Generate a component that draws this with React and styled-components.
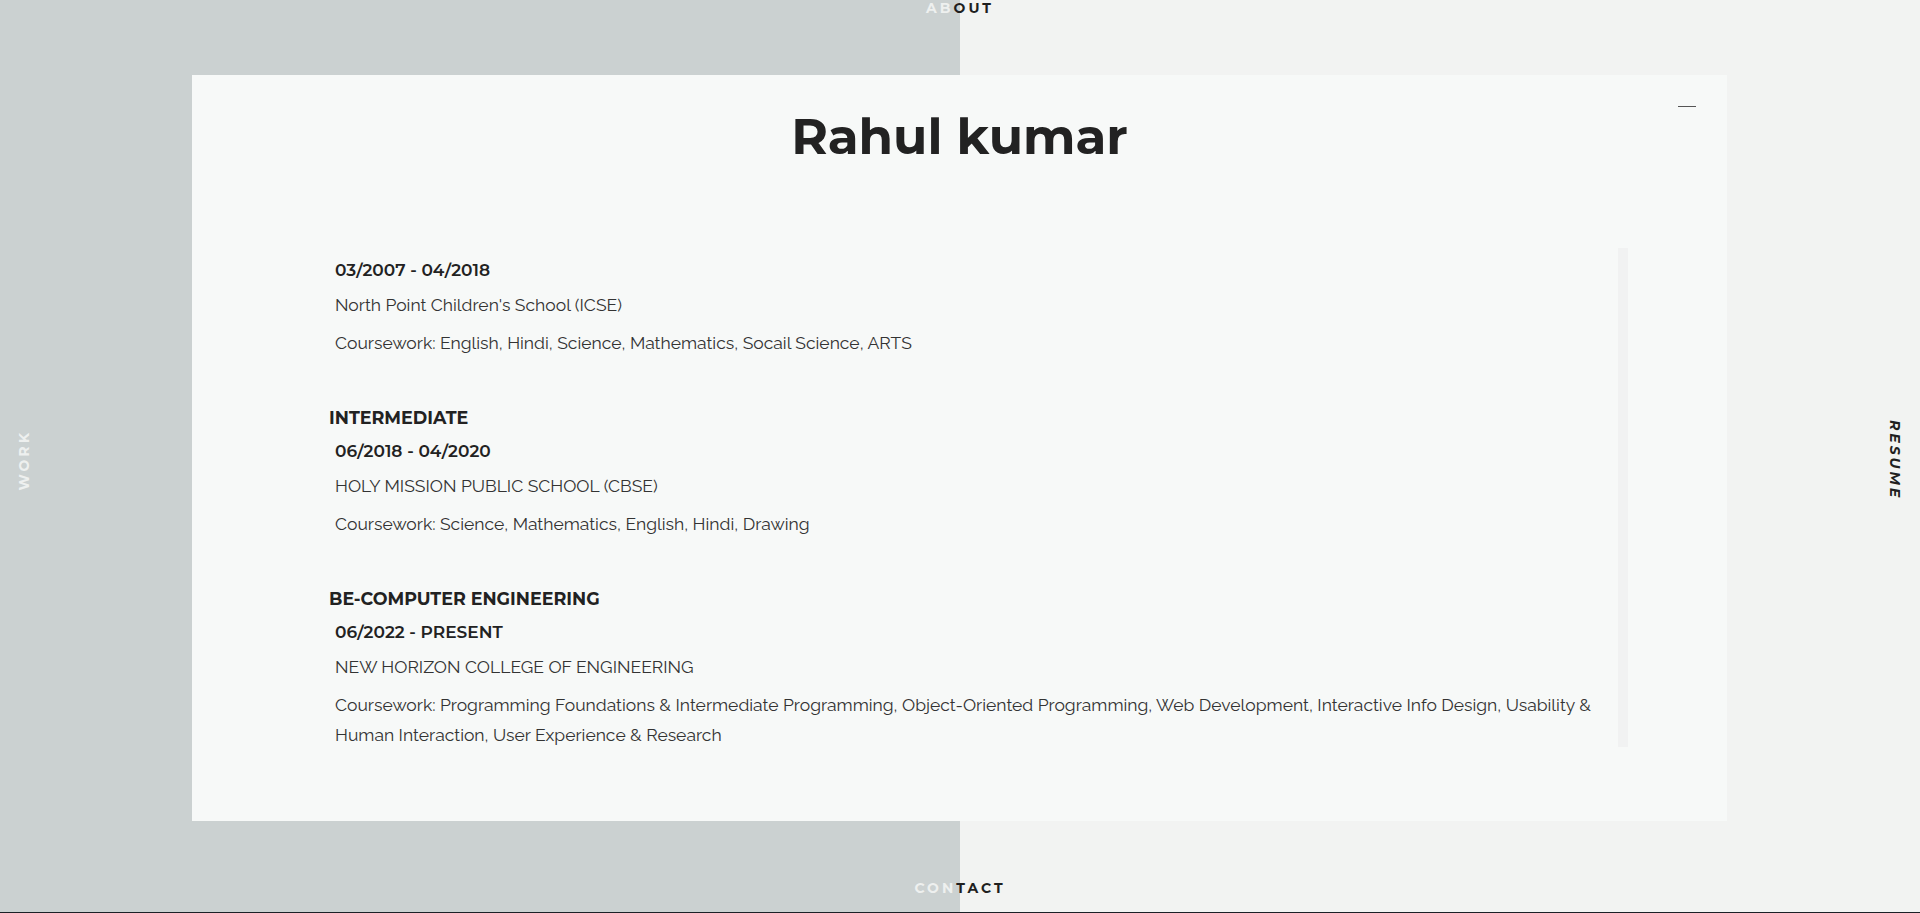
import React from 'react';
import styled, { createGlobalStyle } from 'styled-components';

const GlobalStyle = createGlobalStyle`
  html, body {
    margin: 0;
    padding: 0;
    background: #1b2026;
  }
  * { box-sizing: border-box; }
`;

const Page = styled.div`
  height: 912px;
  display: flex;
  flex-direction: column;
  background: linear-gradient(90deg, #cbd1d1 0, #cbd1d1 50%, #f2f3f2 50%, #f2f3f2 100%);
  overflow: hidden;
`;

const NavBar = styled.div`
  height: ${(p) => p.h}px;
  display: flex;
  justify-content: center;
  align-items: flex-start;
  padding-top: ${(p) => p.top}px;
`;

const NavLink = styled.a`
  font-family: 'Montserrat', 'Inter', 'Liberation Sans', sans-serif;
  font-weight: 700;
  font-size: 14px;
  letter-spacing: 3px;
  line-height: 14px;
  text-transform: uppercase;
  cursor: pointer;
`;

const Letter = styled.span`
  color: ${(p) => (p.light ? '#eef0ef' : '#1f1f1f')};
`;

const Middle = styled.div`
  flex: 1;
  display: grid;
  grid-template-columns: 192px 1535px 1fr;
`;

const Side = styled.div`
  display: flex;
  align-items: center;
  justify-content: ${(p) => (p.right ? 'flex-end' : 'flex-start')};
  padding: 24px ${(p) => (p.right ? '16px' : '0')} 0 ${(p) => (p.right ? '0' : '15px')};
`;

const SideLabel = styled.span`
  font-family: 'Montserrat', 'Inter', 'Liberation Sans', sans-serif;
  font-weight: 700;
  font-size: 14px;
  letter-spacing: 3px;
  color: ${(p) => (p.light ? '#eef0ef' : '#1f1f1f')};
  font-style: ${(p) => (p.italic ? 'italic' : 'normal')};
  writing-mode: vertical-rl;
  transform: ${(p) => (p.up ? 'rotate(180deg)' : 'none')};
`;

const Modal = styled.div`
  position: relative;
  background: #f7f9f8;
  display: flex;
  flex-direction: column;
  padding: 0 99px 0 137px;
`;

const Close = styled.button`
  position: absolute;
  top: 20px;
  right: 24px;
  width: 32px;
  height: 22px;
  border: none;
  background: transparent;
  cursor: pointer;
  display: flex;
  align-items: center;
  justify-content: center;
  &::before {
    content: '';
    width: 18px;
    height: 1px;
    background: #555;
  }
`;

const Title = styled.h1`
  margin: 0;
  padding-top: 26px;
  margin-left: -38px;
  text-align: center;
  font-family: 'Montserrat', 'Inter', 'Liberation Sans', sans-serif;
  font-weight: 700;
  font-size: 50px;
  line-height: 72px;
  color: #222;
`;

const ScrollArea = styled.div`
  margin-top: 75px;
  height: 499px;
  display: flex;
  gap: 16px;
`;

const Content = styled.div`
  flex: 1;
  padding-top: 7px;
`;

const Track = styled.div`
  width: 10px;
  flex-shrink: 0;
  background: #f1f2f2;
`;

const Section = styled.section`
  margin-bottom: 49px;
`;

const SectionHead = styled.h3`
  margin: 0 0 7px;
  font-family: 'Montserrat', 'Inter', 'Liberation Sans', sans-serif;
  font-weight: 700;
  font-size: 17.5px;
  line-height: 22px;
  color: #222;
`;

const DateLine = styled.div`
  margin: 0 0 5px 6px;
  font-family: 'Montserrat', 'Inter', 'Liberation Sans', sans-serif;
  font-weight: 600;
  font-size: 17px;
  line-height: 30px;
  color: #222;
`;

const Text = styled.p`
  margin: 0 0 7px 6px;
  font-family: 'Raleway', 'Lato', 'Liberation Sans', sans-serif;
  font-size: 17.5px;
  line-height: 30.5px;
  color: #333;
`;

const education = [
  {
    head: null,
    date: '03/2007 - 04/2018',
    school: "North Point Children's School (ICSE)",
    course: 'Coursework: English, Hindi, Science, Mathematics, Socail Science, ARTS',
  },
  {
    head: 'INTERMEDIATE',
    date: '06/2018 - 04/2020',
    school: 'HOLY MISSION PUBLIC SCHOOL (CBSE)',
    course: 'Coursework: Science, Mathematics, English, Hindi, Drawing',
  },
  {
    head: 'BE-COMPUTER ENGINEERING',
    date: '06/2022 - PRESENT',
    school: 'NEW HORIZON COLLEGE OF ENGINEERING',
    course:
      'Coursework: Programming Foundations & Intermediate Programming, Object-Oriented Programming, Web Development, Interactive Info Design, Usability & Human Interaction, User Experience & Research',
  },
];

function SplitWord({ word, split }) {
  return word.split('').map((ch, i) => (
    <Letter key={i} light={i < split}>
      {ch}
    </Letter>
  ));
}

function App() {
  return (
    <>
      <GlobalStyle />
      <Page>
        <NavBar h={75} top={1}>
          <NavLink>
            <SplitWord word="ABOUT" split={2} />
          </NavLink>
        </NavBar>

        <Middle>
          <Side>
            <SideLabel light up>WORK</SideLabel>
          </Side>

          <Modal>
            <Close aria-label="close" />
            <Title>Rahul kumar</Title>
            <ScrollArea>
              <Content>
                {education.map((ed, i) => (
                  <Section key={i}>
                    {ed.head && <SectionHead>{ed.head}</SectionHead>}
                    <DateLine>{ed.date}</DateLine>
                    <Text>{ed.school}</Text>
                    <Text>{ed.course}</Text>
                  </Section>
                ))}
              </Content>
              <Track />
            </ScrollArea>
          </Modal>

          <Side right>
            <SideLabel italic>RESUME</SideLabel>
          </Side>
        </Middle>

        <NavBar h={91} top={60}>
          <NavLink>
            <SplitWord word="CONTACT" split={3} />
          </NavLink>
        </NavBar>
      </Page>
    </>
  );
}

export default App;
